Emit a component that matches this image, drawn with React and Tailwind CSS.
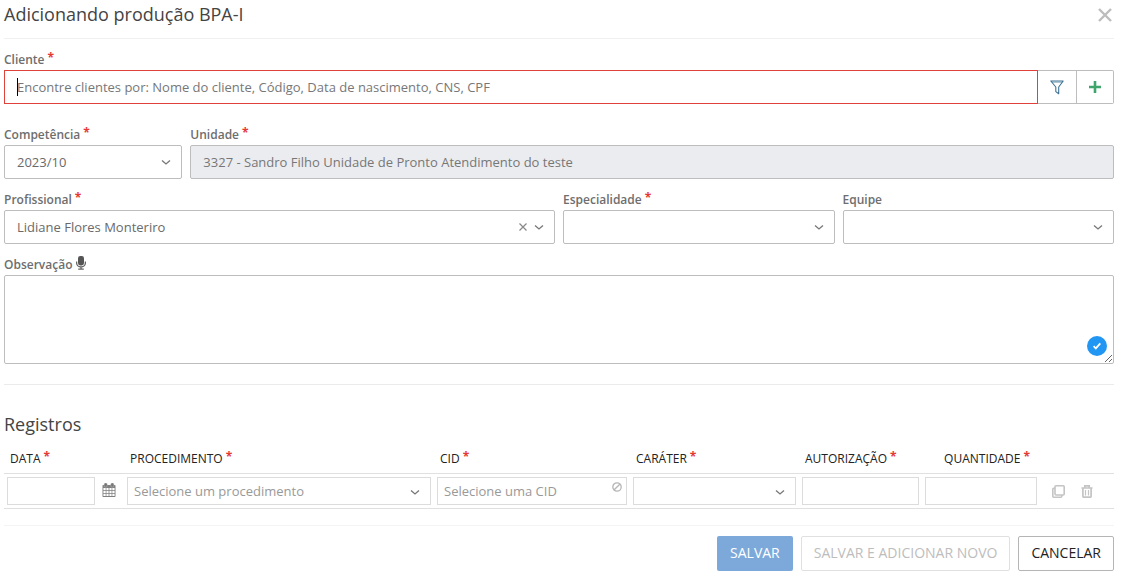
import { useState } from 'react';

const controlClass =
  'block h-[34px] w-full rounded-xs border border-[#bdbdbd] bg-white px-3 text-[13px] text-[#6a6a6a] outline-none';
const cellClass =
  'block h-7 w-full border border-[#dcdcdc] bg-white px-1.5 text-[13px] text-[#6a6a6a] outline-none placeholder:text-[#999]';

function Required() {
  return <span className="relative -top-0.5 ml-[3px] text-xs leading-none font-bold text-[#e53935]">*</span>;
}

function Chevron({ className }) {
  return (
    <svg
      viewBox="0 0 10 10"
      className={`pointer-events-none absolute h-2.5 w-2.5 ${className}`}
      fill="none"
      stroke="#777"
      strokeWidth="1.3"
      aria-hidden="true"
    >
      <path d="M1 3.4l4 3.6 4-3.6" />
    </svg>
  );
}

function Field({ id, label, required, icon, className = '', children }) {
  return (
    <div className={className}>
      <label htmlFor={id} className="flex h-[21px] items-center text-xs font-semibold text-[#6e6e6e]">
        {label}
        {required ? <Required /> : null}
        {icon}
      </label>
      {children}
    </div>
  );
}

function SelectField({ id, options, value, onChange }) {
  return (
    <>
      <select id={id} value={value} onChange={onChange} className={`${controlClass} appearance-none pt-0.5`}>
        {options.map((option) => (
          <option key={option} value={option}>
            {option}
          </option>
        ))}
      </select>
      <Chevron className="top-3 right-[11px]" />
    </>
  );
}

function MicIcon() {
  return (
    <svg viewBox="0 0 10 14" className="ml-1 mb-1 h-3.5 w-2.5" aria-hidden="true">
      <rect x="2" y="0" width="6" height="9.4" rx="2.3" fill="#555" />
      <path d="M.6 5.4v1.4a4.4 4.2 0 0 0 8.8 0V5.4M5 11v2.2M2.2 13.2h5.6" fill="none" stroke="#666" strokeWidth="1.3" />
    </svg>
  );
}

function FilterIcon() {
  return (
    <svg viewBox="0 0 14 15" className="h-[15px] w-3.5" fill="none" stroke="#3d7396" strokeWidth="1.1" aria-hidden="true">
      <path d="M.8 1h12.4L8.7 7v6.8L5.8 11.6V7z" strokeLinejoin="round" />
      <path d="M2 2.2h10" strokeWidth="0.6" />
    </svg>
  );
}

function CalendarIcon() {
  return (
    <svg viewBox="0 0 14 14" className="h-3.5 w-3.5" aria-hidden="true">
      <path d="M1.2 2h11.6q.7 0 .7.7v10.6q0 .7-.7.7H1.2q-.7 0-.7-.7V2.7q0-.7.7-.7z" fill="#808080" />
      <rect x="2.2" y="0" width="3" height="4" rx="1.3" fill="#777" stroke="#ccc" strokeWidth="0.4" />
      <rect x="8.8" y="0" width="3" height="4" rx="1.3" fill="#777" stroke="#ccc" strokeWidth="0.4" />
      <path
        d="M1.4 5h2.3v2.2H1.4zM4.4 5h2.2v2.2H4.4zM7.4 5h2.2v2.2H7.4zM10.3 5h2.3v2.2h-2.3zM1.4 8h2.3v2.2H1.4zM4.4 8h2.2v2.2H4.4zM7.4 8h2.2v2.2H7.4zM10.3 8h2.3v2.2h-2.3zM1.4 11h2.3v2H1.4zM4.4 11h2.2v2H4.4zM7.4 11h2.2v2H7.4zM10.3 11h2.3v2h-2.3z"
        fill="#fff"
      />
    </svg>
  );
}

function CopyIcon() {
  return (
    <svg viewBox="0 0 13 13" className="h-[13px] w-[13px]" fill="none" stroke="#c4c4c4" strokeWidth="1.6" aria-hidden="true">
      <rect x="3" y=".8" width="9.2" height="9.2" rx="1" />
      <path d="M3 3.2H1.8q-1 0-1 1v7q0 1 1 1h7q1 0 1-1V10" />
    </svg>
  );
}

function TrashIcon() {
  return (
    <svg viewBox="0 0 12 13" className="h-[13px] w-3" fill="none" stroke="#c4c4c4" strokeWidth="1.7" aria-hidden="true">
      <path d="M.5 3h11M3.8 2.8V.9h4.4v1.9M1.9 3.2v8q0 1 1 1h6.2q1 0 1-1v-8" />
      <path d="M4.5 5v5.5M7.5 5v5.5" strokeWidth="1.2" />
    </svg>
  );
}

function BlockedIcon() {
  return (
    <svg
      viewBox="0 0 10 10"
      className="pointer-events-none absolute top-[5px] right-[5px] h-2.5 w-2.5"
      fill="none"
      stroke="#b5b5b5"
      strokeWidth="1.3"
      aria-hidden="true"
    >
      <circle cx="5" cy="5" r="4.2" />
      <path d="M2.2 7.8l5.6-5.6" />
    </svg>
  );
}

const columns = [
  { label: 'DATA', className: 'w-[120px] px-1.5 text-left' },
  { label: 'PROCEDIMENTO', className: 'px-1.5 text-left' },
  { label: 'CID', className: 'w-[196px] px-1.5 text-left' },
  { label: 'CARÁTER', className: 'w-[169px] px-1.5 text-left' },
  { label: 'AUTORIZAÇÃO', className: 'w-[123px] px-1.5 text-left' },
  { label: 'QUANTIDADE', className: 'w-[118px] pr-2.5 text-right' },
];

function RecordsTable() {
  return (
    <table className="w-full table-fixed border-separate border-spacing-0">
      <thead>
        <tr>
          {columns.map((column) => (
            <th
              key={column.label}
              className={`h-[31px] border-b border-[#e0e0e0] pt-0.5 text-xs font-medium text-[#222] ${column.className}`}
            >
              {column.label}
              <Required />
            </th>
          ))}
          <td className="w-[74px] border-b border-[#e0e0e0]" />
        </tr>
      </thead>
      <tbody>
        <tr className="*:border-b *:border-[#e0e0e0] *:p-[3px]">
          <td>
            <div className="flex items-center">
              <input aria-label="Data" className={`${cellClass} min-w-0 flex-1`} />
              <button type="button" aria-label="Abrir calendário" className="flex w-[26px] justify-center pr-px pb-0.5 pl-[3px]">
                <CalendarIcon />
              </button>
            </div>
          </td>
          <td>
            <div className="relative">
              <select aria-label="Procedimento" className={`${cellClass} appearance-none pt-0.5 text-[#999]`}>
                <option>Selecione um procedimento</option>
              </select>
              <Chevron className="top-[10px] right-[11px]" />
            </div>
          </td>
          <td>
            <div className="relative">
              <input aria-label="CID" placeholder="Selecione uma CID" className={cellClass} />
              <BlockedIcon />
            </div>
          </td>
          <td>
            <div className="relative">
              <select aria-label="Caráter" className={`${cellClass} appearance-none`}>
                <option value="" />
              </select>
              <Chevron className="top-[10px] right-[11px]" />
            </div>
          </td>
          <td>
            <input aria-label="Autorização" className={cellClass} />
          </td>
          <td>
            <input aria-label="Quantidade" className={cellClass} />
          </td>
          <td>
            <div className="flex items-center gap-4 pl-[9px]">
              <button type="button" aria-label="Duplicar registro">
                <CopyIcon />
              </button>
              <button type="button" aria-label="Excluir registro">
                <TrashIcon />
              </button>
            </div>
          </td>
        </tr>
      </tbody>
    </table>
  );
}

export default function App() {
  const [cliente, setCliente] = useState('');
  const [profissional, setProfissional] = useState('Lidiane Flores Monteriro');

  return (
    <form
      className="bg-white pr-2 pl-1 font-['Open_Sans','Noto_Sans',sans-serif]"
      onSubmit={(event) => event.preventDefault()}
    >
      <header className="flex h-[39px] items-start justify-between border-b border-[#f0f0f0]">
        <h1 className="text-lg leading-7 text-[#444]">Adicionando produção BPA-I</h1>
        <button type="button" aria-label="Fechar" className="mt-2 mr-0.5">
          <svg viewBox="0 0 14 14" className="h-3.5 w-3.5" stroke="#bdbdbd" strokeWidth="2.4" aria-hidden="true">
            <path d="M1 1l12 12M13 1L1 13" />
          </svg>
        </button>
      </header>

      <Field id="cliente" label="Cliente" required className="pt-2.5">
        <div className="flex">
          <div className="relative flex-1">
            <input
              id="cliente"
              value={cliente}
              onChange={(event) => setCliente(event.target.value)}
              placeholder="Encontre clientes por: Nome do cliente, Código, Data de nascimento, CNS, CPF"
              className="block h-[34px] w-full border border-[#e0413a] px-3 text-[13px] text-[#555] caret-transparent outline-none placeholder:text-[#777]"
            />
            {cliente === '' ? <span className="absolute top-2 left-[13px] h-[18px] w-px bg-black" /> : null}
          </div>
          <button
            type="button"
            aria-label="Filtrar clientes"
            className="flex h-[34px] w-[39px] items-center justify-center border-y border-r border-[#bdbdbd]"
          >
            <FilterIcon />
          </button>
          <button
            type="button"
            aria-label="Adicionar cliente"
            className="flex h-[34px] w-[37px] items-center justify-center rounded-r-xs border-y border-r border-[#bdbdbd]"
          >
            <svg viewBox="0 0 12 12" className="h-3 w-3" stroke="#3fa66b" strokeWidth="2.6" aria-hidden="true">
              <path d="M6 0v12M0 6h12" />
            </svg>
          </button>
        </div>
      </Field>

      <div className="mt-5 grid grid-cols-12 gap-x-2 gap-y-2.5">
        <Field id="competencia" label="Competência" required className="col-span-2">
          <div className="relative">
            <SelectField id="competencia" options={['2023/10']} />
          </div>
        </Field>
        <Field id="unidade" label="Unidade" required className="col-span-10">
          <input
            id="unidade"
            disabled
            defaultValue="3327 - Sandro Filho Unidade de Pronto Atendimento do teste"
            className="block h-[34px] w-full rounded-xs border border-[#bdbdbd] bg-[#ebecf0] px-3 text-[13px] text-[#777]"
          />
        </Field>
        <Field id="profissional" label="Profissional" required className="col-span-6">
          <div className="relative">
            <SelectField
              id="profissional"
              options={['', 'Lidiane Flores Monteriro']}
              value={profissional}
              onChange={(event) => setProfissional(event.target.value)}
            />
            <button
              type="button"
              aria-label="Limpar profissional"
              className="absolute top-[13px] right-7"
              onClick={() => setProfissional('')}
            >
              <svg viewBox="0 0 8 8" className="h-2 w-2" stroke="#888" strokeWidth="1.2" aria-hidden="true">
                <path d="M.5.5l7 7M7.5.5l-7 7" />
              </svg>
            </button>
          </div>
        </Field>
        <Field id="especialidade" label="Especialidade" required className="col-span-3">
          <div className="relative">
            <SelectField id="especialidade" options={['']} />
          </div>
        </Field>
        <Field id="equipe" label="Equipe" className="col-span-3">
          <div className="relative">
            <SelectField id="equipe" options={['']} />
          </div>
        </Field>
        <Field id="observacao" label="Observação" icon={<MicIcon />} className="col-span-12">
          <div className="relative">
            <textarea
              id="observacao"
              className="block h-[89px] w-full resize-y rounded-xs border border-[#bdbdbd] px-3 py-2 text-[13px] text-[#555] outline-none"
            />
            <button
              type="button"
              aria-label="Verificar texto"
              className="absolute right-[7px] bottom-2 flex h-5 w-5 items-center justify-center rounded-full bg-[#2196f3]"
            >
              <svg viewBox="0 0 8 8" className="h-2 w-2" fill="none" stroke="#fff" strokeWidth="1.8" aria-hidden="true">
                <path d="M.6 4.2l2.2 2.2L7.3 1.4" />
              </svg>
            </button>
          </div>
        </Field>
      </div>

      <section className="mt-5 border-t border-[#ebebeb] pt-6">
        <h2 className="text-lg leading-[30px] text-[#444]">Registros</h2>
        <div className="mt-1">
          <RecordsTable />
        </div>
      </section>

      <footer className="mt-4 flex justify-end gap-2 border-t border-[#f4f4f4] pt-2.5">
        <button type="submit" className="h-[35px] rounded-xs bg-[#7da9da] px-[13px] pb-0.5 text-sm text-white">
          SALVAR
        </button>
        <button
          type="button"
          disabled
          className="h-[35px] rounded-xs border border-[#e0e0e0] px-3 pb-0.5 text-sm text-[#bdbdbd]"
        >
          SALVAR E ADICIONAR NOVO
        </button>
        <button type="button" className="h-[35px] rounded-xs border border-[#b5b5b5] px-3 pb-0.5 text-sm text-[#222]">
          CANCELAR
        </button>
      </footer>
    </form>
  );
}
